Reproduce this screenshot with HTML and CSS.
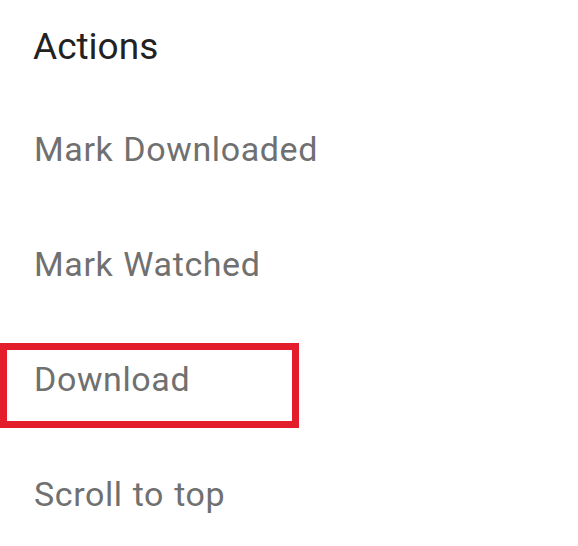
FILE: index.html
```html
<!DOCTYPE html>
<html>
<head>
<meta charset="utf-8">
<link rel="stylesheet" href="styles.css">
</head>
<body>
<div class="menu">
  <div class="title">Actions</div>
  <div class="item">Mark Downloaded</div>
  <div class="item">Mark Watched</div>
  <div class="item item-marked">Download</div>
  <div class="item">Scroll to top</div>
</div>
</body>
</html>
```

FILE: styles.css
```css
html, body {
  margin: 0;
  padding: 0;
  background: #ffffff;
}
.menu {
  font-family: Roboto, "Noto Sans", sans-serif;
  width: 578px;
  height: 546px;
  overflow: hidden;
}
.title {
  padding-left: 33px;
  padding-top: 1px;
  height: 91px;
  line-height: 92px;
  font-size: 37px;
  color: #222222;
}
.item {
  position: relative;
  padding-left: 34px;
  height: 115px;
  line-height: 115px;
  font-size: 34px;
  letter-spacing: 0.6px;
  word-spacing: 1px;
  color: #707070;
}
.item-marked::after {
  content: "";
  position: absolute;
  left: 0;
  top: 21px;
  width: 299px;
  height: 85px;
  box-sizing: border-box;
  border: 7px solid #e31e2a;
}
```
